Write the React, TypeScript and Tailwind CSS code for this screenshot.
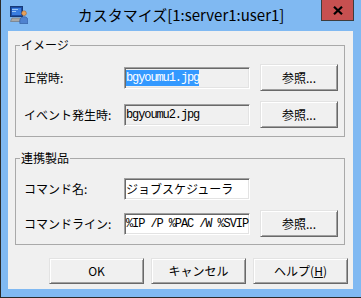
import React from "react";

const ui = "font-['Noto_Sans_CJK_JP','Noto_Sans',sans-serif]";
const mono = "font-['Liberation_Mono','Noto_Sans_CJK_JP',monospace] text-[12px] tracking-[-1.1px]";

const AppIcon = () => (
  <svg width="18" height="18" viewBox="0 0 18 18">
    <rect x="0.5" y="0.5" width="12" height="10" fill="#1c4ea6" stroke="#173a78" />
    <rect x="2" y="2" width="9" height="7" fill="#3a7de0" />
    <rect x="2" y="3" width="6" height="1" fill="#9cc6f5" />
    <rect x="2" y="5" width="4" height="1" fill="#9cc6f5" />
    <path d="M2 12h9l1.5 3.5h-12z" fill="#a8a8a8" stroke="#6f6f6f" strokeWidth="0.6" />
    <circle cx="14" cy="7.2" r="2.4" fill="#e6a15d" stroke="#9a5a25" strokeWidth="0.5" />
    <path d="M9.8 17.5v-3.2c0-2 1.8-3.6 4.2-3.6s4 1.6 4 3.6v3.2z" fill="#4f82cf" stroke="#2c5598" strokeWidth="0.6" />
  </svg>
);

const Button = ({ children, w }: { children: React.ReactNode; w: string }) => (
  <div
    className={`${w} flex items-center justify-center bg-[#f0f0f0] border border-t-[#e3e3e3] border-l-[#e3e3e3] border-r-[#696969] border-b-[#696969] shadow-[inset_1px_1px_0_#fff,inset_-1px_-1px_0_#a0a0a0] text-[12px] text-black`}
  >
    {children}
  </div>
);

const Field = ({ children, bg }: { children: React.ReactNode; bg: string }) => (
  <div
    className={`w-[126px] h-[22px] ${bg} border border-t-[#a0a0a0] border-l-[#a0a0a0] border-r-white border-b-white shadow-[inset_1px_1px_0_#696969,inset_-1px_-1px_0_#e3e3e3] flex items-center overflow-hidden whitespace-nowrap pl-[1px] text-[12px] text-black`}
  >
    {children}
  </div>
);

const Row = ({ label, children, browse }: { label: string; children: React.ReactNode; browse?: boolean }) => (
  <div className="h-[27px] flex items-center">
    <div className="w-[108px] pl-[8px] text-[12px] text-black">{label}</div>
    {children}
    {browse && (
      <div className="ml-[10px]">
        <Button w="w-[78px] h-[27px]">参照...</Button>
      </div>
    )}
  </div>
);

const Group = ({ title, children, cls }: { title: string; children: React.ReactNode; cls: string }) => (
  <fieldset className={`w-[330px] border border-[#a9a9a9] ${cls}`}>
    <legend className="ml-[4px] px-[1px] h-[16px] leading-[16px] text-[12px] text-black">{title}</legend>
    {children}
  </fieldset>
);

export default function App() {
  return (
    <div className={`w-[361px] h-[298px] bg-[#80b9f2] border-l border-b border-[#2a2a2a] flex flex-col ${ui}`}>
      {/* title bar */}
      <div className="h-[31px] grid grid-cols-[1fr_auto_1fr]">
        <div className="pl-[9px] pt-[6px]">
          <AppIcon />
        </div>
        <div className="pt-[5px] text-[15px] leading-[20px] text-black">カスタマイズ[1:server1:user1]</div>
        <div className="flex justify-end pr-[7px]">
          <div className="w-[33px] h-[21px] bg-[#c75050] border border-t-0 border-[#3d3d3d] flex items-center justify-center">
            <svg width="10" height="9" viewBox="0 0 10 9">
              <path d="M1 0.8l8 7.4M9 0.8l-8 7.4" stroke="#000" strokeWidth="2.2" />
            </svg>
          </div>
        </div>
      </div>

      {/* client area */}
      <div className="flex-1 ml-[7px] mr-[8px] mb-[8px] bg-[#f0f0f0] flex flex-col pl-[7px] pr-[5px] pt-[6px]">
        <Group title="イメージ" cls="">
          <div className="pt-[11px] pb-[8px] flex flex-col gap-[10px]">
            <Row label="正常時:" browse>
              <Field bg="bg-[#f0f0f0]">
                <span className="w-px h-[15px] bg-black -mr-px" />
                <span className={`${mono} leading-[16px] bg-[#3399ff] text-white`}>bgyoumu1.jpg</span>
              </Field>
            </Row>
            <Row label="イベント発生時:" browse>
              <Field bg="bg-[#f0f0f0]">
                <span className={mono}>bgyoumu2.jpg</span>
              </Field>
            </Row>
          </div>
        </Group>

        <Group title="連携製品" cls="mt-[13px]">
          <div className="pt-[9px] pb-[7px] flex flex-col gap-[8px]">
            <Row label="コマンド名:">
              <Field bg="bg-white">
                <span>ジョブスケジューラ</span>
              </Field>
            </Row>
            <Row label="コマンドライン:" browse>
              <Field bg="bg-white">
                <span className={mono}>%IP /P %PAC /W %SVIP</span>
              </Field>
            </Row>
          </div>
        </Group>

        <div className="mt-[13px] flex justify-end gap-[7px]">
          <Button w="w-[95px] h-[26px]">OK</Button>
          <Button w="w-[95px] h-[26px]">キャンセル</Button>
          <Button w="w-[95px] h-[26px]">
            <span>
              ヘルプ(<span className="underline">H</span>)
            </span>
          </Button>
        </div>
      </div>
    </div>
  );
}
